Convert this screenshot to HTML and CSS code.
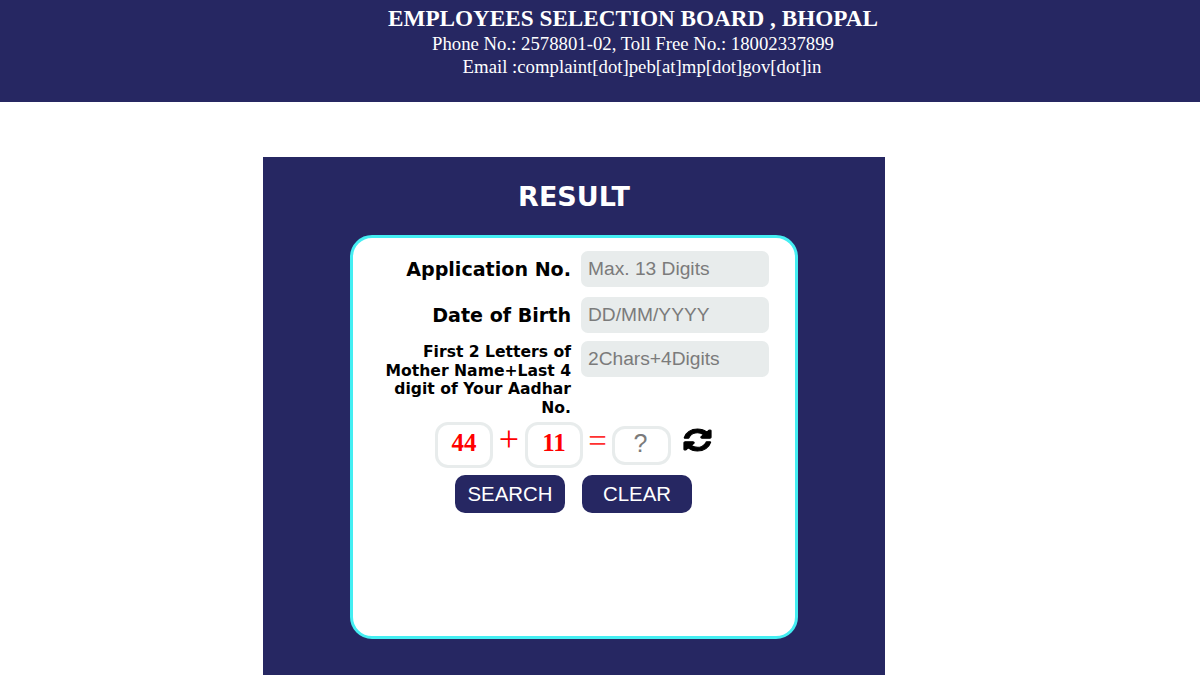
FILE: index.html
```html
<!DOCTYPE html>
<html lang="en">
<head>
    <meta charset="UTF-8">
    <title>Result</title>
    <link rel="stylesheet" href="styles.css">
</head>
<body>
    <div class="header">
        <div class="board">EMPLOYEES SELECTION BOARD , BHOPAL</div>
        <div class="contact">Phone No.: 2578801-02, Toll Free No.: 18002337899</div>
        <div class="contact email">Email :complaint[dot]peb[at]mp[dot]gov[dot]in</div>
    </div>
    <div class="panel">
        <h1 class="title">RESULT</h1>
        <form class="card">
            <div class="row">
                <label class="label">Application No.</label>
                <input class="textbox" type="text" placeholder="Max. 13 Digits">
            </div>
            <div class="row">
                <label class="label">Date of Birth</label>
                <input class="textbox" type="text" placeholder="DD/MM/YYYY">
            </div>
            <div class="row row_long">
                <label class="label label_small">First 2 Letters of Mother Name+Last 4 digit of Your Aadhar No.</label>
                <input class="textbox" type="text" placeholder="2Chars+4Digits">
            </div>
            <div class="captcha">
                <span class="num">44</span>
                <span class="plus">+</span>
                <span class="num">11</span>
                <span class="equals">=</span>
                <input class="answer" type="text" placeholder="?">
                <svg class="refresh" viewBox="128 128 1536 1536" preserveAspectRatio="none"><path d="M1639 1056q0 5-1 7-64 268-268 434.5t-478 166.5q-146 0-282.5-55t-243.5-157l-129 129q-19 19-45 19t-45-19-19-45v-448q0-26 19-45t45-19h448q26 0 45 19t19 45-19 45l-137 137q71 66 161 102t187 36q134 0 250-65t186-179q11-17 53-117 8-23 30-23h192q13 0 22.5 9.5t9.5 22.5zm25-800v448q0 26-19 45t-45 19h-448q-26 0-45-19t-19-45 19-45l138-138q-148-137-349-137-134 0-250 65t-186 179q-11 17-53 117-8 23-30 23h-199q-13 0-22.5-9.5t-9.5-22.5v-7q65-268 270-434.5t480-166.5q146 0 284 55.5t245 156.5l130-129q19-19 45-19t45 19 19 45z"/></svg>
            </div>
            <div class="actions">
                <button class="buttons" type="button">SEARCH</button>
                <button class="buttons" type="reset">CLEAR</button>
            </div>
        </form>
    </div>
</body>
</html>
```

FILE: styles.css
```css
html, body
{
    margin: 0;
    height: 675px;
    overflow: hidden;
    background-color: #ffffff;
}
.header
{
    box-sizing: border-box;
    height: 102px;
    padding: 5px 0 0 66px;
    background-color: #262762;
    color: #ffffff;
    text-align: center;
    font-family: "Liberation Serif", serif;
}
.board
{
    font-size: 23.2px;
    font-weight: bold;
    line-height: 27px;
}
.contact
{
    font-size: 18.75px;
    line-height: 23px;
}
.email
{
    padding-left: 18px;
}
.panel
{
    box-sizing: border-box;
    width: 622px;
    height: 518px;
    margin: 55px 0 0 263px;
    padding-top: 24px;
    background-color: #262762;
}
.title
{
    margin: 0 0 22px 0;
    color: #ffffff;
    text-align: center;
    font-family: "DejaVu Sans", sans-serif;
    font-size: 27px;
    font-weight: bold;
    line-height: 32px;
}
.card
{
    box-sizing: border-box;
    width: 448px;
    height: 404px;
    margin-left: 87px;
    padding: 13px 0 0 0;
    border: 3px solid #44eef2;
    border-radius: 22px;
    background-color: #ffffff;
}
.row
{
    display: flex;
    align-items: flex-start;
    gap: 10px;
    margin-bottom: 10px;
}
.row_long
{
    margin-bottom: 5px;
}
.label
{
    flex: none;
    box-sizing: border-box;
    width: 218px;
    height: 36px;
    padding-left: 20px;
    color: #000000;
    text-align: right;
    font-family: "DejaVu Sans", sans-serif;
    font-size: 19.1px;
    font-weight: bold;
    line-height: 38px;
}
.label_small
{
    height: auto;
    padding-left: 30px;
    font-size: 15.6px;
    line-height: 18.6px;
}
.textbox
{
    box-sizing: border-box;
    width: 188px;
    height: 36px;
    padding: 0 7px;
    border: 0;
    border-radius: 7px;
    background-color: #e8ecec;
    font-family: "Liberation Sans", sans-serif;
    font-size: 19.2px;
}
.textbox::placeholder, .answer::placeholder
{
    color: #7b7b7b;
    opacity: 1;
}
.row_long .textbox
{
    margin-top: -2px;
}
.captcha
{
    display: flex;
    align-items: flex-start;
    height: 46px;
    margin: 0 0 7px 82px;
}
.num
{
    flex: none;
    box-sizing: border-box;
    width: 58px;
    height: 46px;
    border: 3px solid #e8ecec;
    border-radius: 13px;
    color: #ff0000;
    text-align: center;
    font-family: "Liberation Serif", serif;
    font-size: 25px;
    font-weight: bold;
    line-height: 36px;
}
.plus
{
    flex: none;
    width: 32px;
    color: #ff0000;
    text-align: center;
    font-family: "Liberation Serif", serif;
    font-size: 36px;
    line-height: 34px;
}
.equals
{
    flex: none;
    width: 29px;
    color: #ff3030;
    text-align: center;
    font-family: "Liberation Serif", serif;
    font-size: 33px;
    line-height: 38px;
}
.answer
{
    flex: none;
    box-sizing: border-box;
    width: 59px;
    height: 39px;
    margin-top: 4px;
    padding: 0 2px 4px 0;
    border: 3px solid #e8ecec;
    border-radius: 13px;
    outline: 0;
    text-align: center;
    font-family: "Liberation Sans", sans-serif;
    font-size: 25px;
}
.refresh
{
    flex: none;
    width: 27px;
    height: 22px;
    margin: 7px 0 0 13px;
    overflow: visible;
    stroke: #000000;
    stroke-width: 70px;
}
.actions
{
    display: flex;
    gap: 17px;
    margin-left: 102px;
}
.buttons
{
    box-sizing: border-box;
    width: 110px;
    height: 38px;
    padding: 0;
    border: 0;
    border-radius: 10px;
    background-color: #262762;
    color: #ffffff;
    font-family: "Liberation Sans", sans-serif;
    font-size: 20.4px;
}
```
